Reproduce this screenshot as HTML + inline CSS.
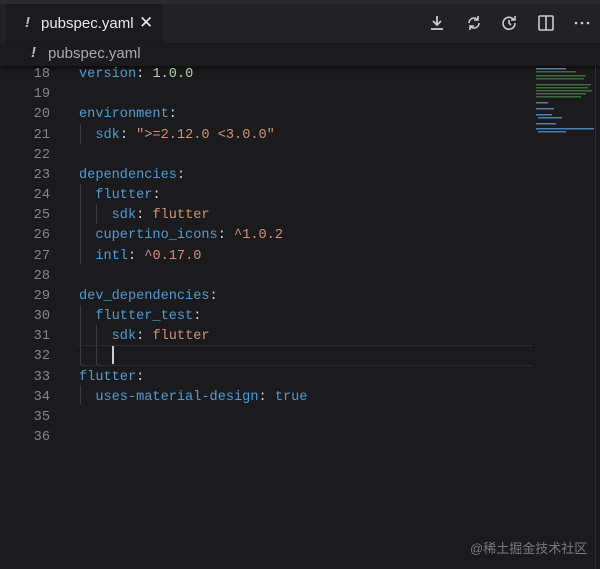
<!DOCTYPE html>
<html><head><meta charset="utf-8"><style>
body{margin:0;width:600px;height:569px;background:#1b1b1d;overflow:hidden;position:relative;font-family:"Liberation Sans",sans-serif}
.top{position:absolute;left:0;top:0;width:600px;height:4px;background:#2a2a2c}
.tabbar{position:absolute;left:0;top:4px;width:600px;height:39px;background:#222224}
.tab{position:absolute;left:6px;top:0;width:157px;height:39px;background:#1b1b1d;color:#e8e8e8;font-size:15px}
.bc{position:absolute;left:0;top:43px;width:600px;height:23px;background:#1b1b1d;color:#aaa;font-size:15px;box-shadow:0 3px 4px rgba(0,0,0,.5)}
.code{position:absolute;left:0;top:65px;font-family:"Liberation Mono",monospace;font-size:13.6px;line-height:20.17px;white-space:pre}
.ln{position:absolute;left:0;width:50px;text-align:right;color:#858585}
.tx{position:absolute;left:79px;color:#d4d4d4}
.k{color:#4e9bd6}.s{color:#ce9178}.n{color:#b5cea8}.p{color:#d4d4d4}
.g{position:absolute;width:1px;background:#3a3a3c}
</style></head><body>
<div class="top"></div>
<div class="tabbar">
<div class="tab"><span style="position:absolute;left:19px;top:10px;color:#bbb;font-style:italic;font-weight:bold">!</span><span style="position:absolute;left:35px;top:11px">pubspec.yaml</span><span style="position:absolute;left:133px;top:9px;font-size:17px">✕</span></div>
<svg style="position:absolute;left:428px;top:10px" width="18" height="18" fill="none" stroke="#ccc" stroke-width="1.8"><path d="M9 2v9M5 7l4 4 4-4"/><path d="M3 15h12"/></svg>
<svg style="position:absolute;left:465px;top:10px" width="18" height="18" fill="none" stroke="#ccc" stroke-width="1.6"><path d="M4 9a5 5 0 0 1 9-3M14 9a5 5 0 0 1-9 3"/><path d="M13 2v4h-4M5 16v-4h4"/></svg>
<svg style="position:absolute;left:500px;top:10px" width="18" height="18" fill="none" stroke="#ccc" stroke-width="1.6"><path d="M14 6a6 6 0 1 0 1 3"/><path d="M15 2v4h-4M9 6v3l2 2"/></svg>
<svg style="position:absolute;left:537px;top:10px" width="18" height="18" fill="none" stroke="#ccc" stroke-width="1.6"><rect x="2" y="2" width="14" height="14" rx="1"/><path d="M9 2v14"/></svg>
<svg style="position:absolute;left:574px;top:16px" width="16" height="6" fill="#ccc"><circle cx="2" cy="3" r="1.3"/><circle cx="8" cy="3" r="1.3"/><circle cx="14" cy="3" r="1.3"/></svg>
</div>
<div class="bc"><span style="position:absolute;left:31px;top:1px;font-style:italic;font-weight:bold;color:#bbb">!</span><span style="position:absolute;left:48px;top:2px">pubspec.yaml</span></div>
<div style="position:absolute;left:79px;top:345px;width:453px;height:19px;border-top:1px solid #2c2c2e;border-bottom:1px solid #2c2c2e"></div>
<div class="g" style="left:80px;top:124px;height:20px"></div>
<div class="g" style="left:80px;top:184px;height:80px"></div>
<div class="g" style="left:96px;top:204px;height:20px"></div>
<div class="g" style="left:80px;top:305px;height:60px"></div>
<div class="g" style="left:96px;top:325px;height:40px"></div>
<div class="g" style="left:80px;top:385px;height:20px"></div>
<div style="position:absolute;left:112px;top:346px;width:2px;height:18px;background:#ccc"></div>
<div class="code">
<div class="ln" style="top:0">18
19
20
21
22
23
24
25
26
27
28
29
30
31
32
33
34
35
36</div>
<div class="tx" style="top:0"><span class="k">version</span><span class="p">: </span><span class="n">1.0.0</span>

<span class="k">environment</span><span class="p">:</span>
  <span class="k">sdk</span><span class="p">: </span><span class="s">"&gt;=2.12.0 &lt;3.0.0"</span>

<span class="k">dependencies</span><span class="p">:</span>
  <span class="k">flutter</span><span class="p">:</span>
    <span class="k">sdk</span><span class="p">: </span><span class="s">flutter</span>
  <span class="k">cupertino_icons</span><span class="p">: </span><span class="s">^1.0.2</span>
  <span class="k">intl</span><span class="p">: </span><span class="s">^0.17.0</span>

<span class="k">dev_dependencies</span><span class="p">:</span>
  <span class="k">flutter_test</span><span class="p">:</span>
    <span class="k">sdk</span><span class="p">: </span><span class="s">flutter</span>

<span class="k">flutter</span><span class="p">:</span>
  <span class="k">uses-material-design</span><span class="p">: </span><span class="k">true</span>
</div>
</div>
<svg style="position:absolute;left:535px;top:66px" width="60" height="70">
<g fill="#3d6a3a"><rect x="1" y="2" width="30" height="1.5" fill="#4e7fb0"/><rect x="1" y="5" width="40" height="1.5"/><rect x="1" y="9" width="50" height="1.5"/><rect x="1" y="12" width="48" height="1.5"/><rect x="1" y="18" width="55" height="1.5"/><rect x="1" y="21" width="52" height="1.5"/><rect x="1" y="24" width="56" height="1.5"/><rect x="1" y="27" width="50" height="1.5"/><rect x="1" y="30" width="45" height="1.5"/></g>
<g fill="#4e7fb0"><rect x="1" y="36" width="12" height="1.5"/><rect x="1" y="42" width="18" height="1.5"/><rect x="1" y="48" width="16" height="1.5"/><rect x="3" y="51" width="24" height="1.5"/><rect x="1" y="57" width="20" height="1.5"/><rect x="1" y="62" width="58" height="1.5"/><rect x="3" y="65" width="28" height="1.5"/></g>
</svg>
<div style="position:absolute;left:595px;top:66px;width:1px;height:503px;background:#2e2e30"></div>
<div style="position:absolute;left:470px;top:538px;color:#7a7a7c;font-size:13px;font-family:'Liberation Sans','Noto Sans CJK SC',sans-serif">@稀土掘金技术社区</div>
</body></html>
